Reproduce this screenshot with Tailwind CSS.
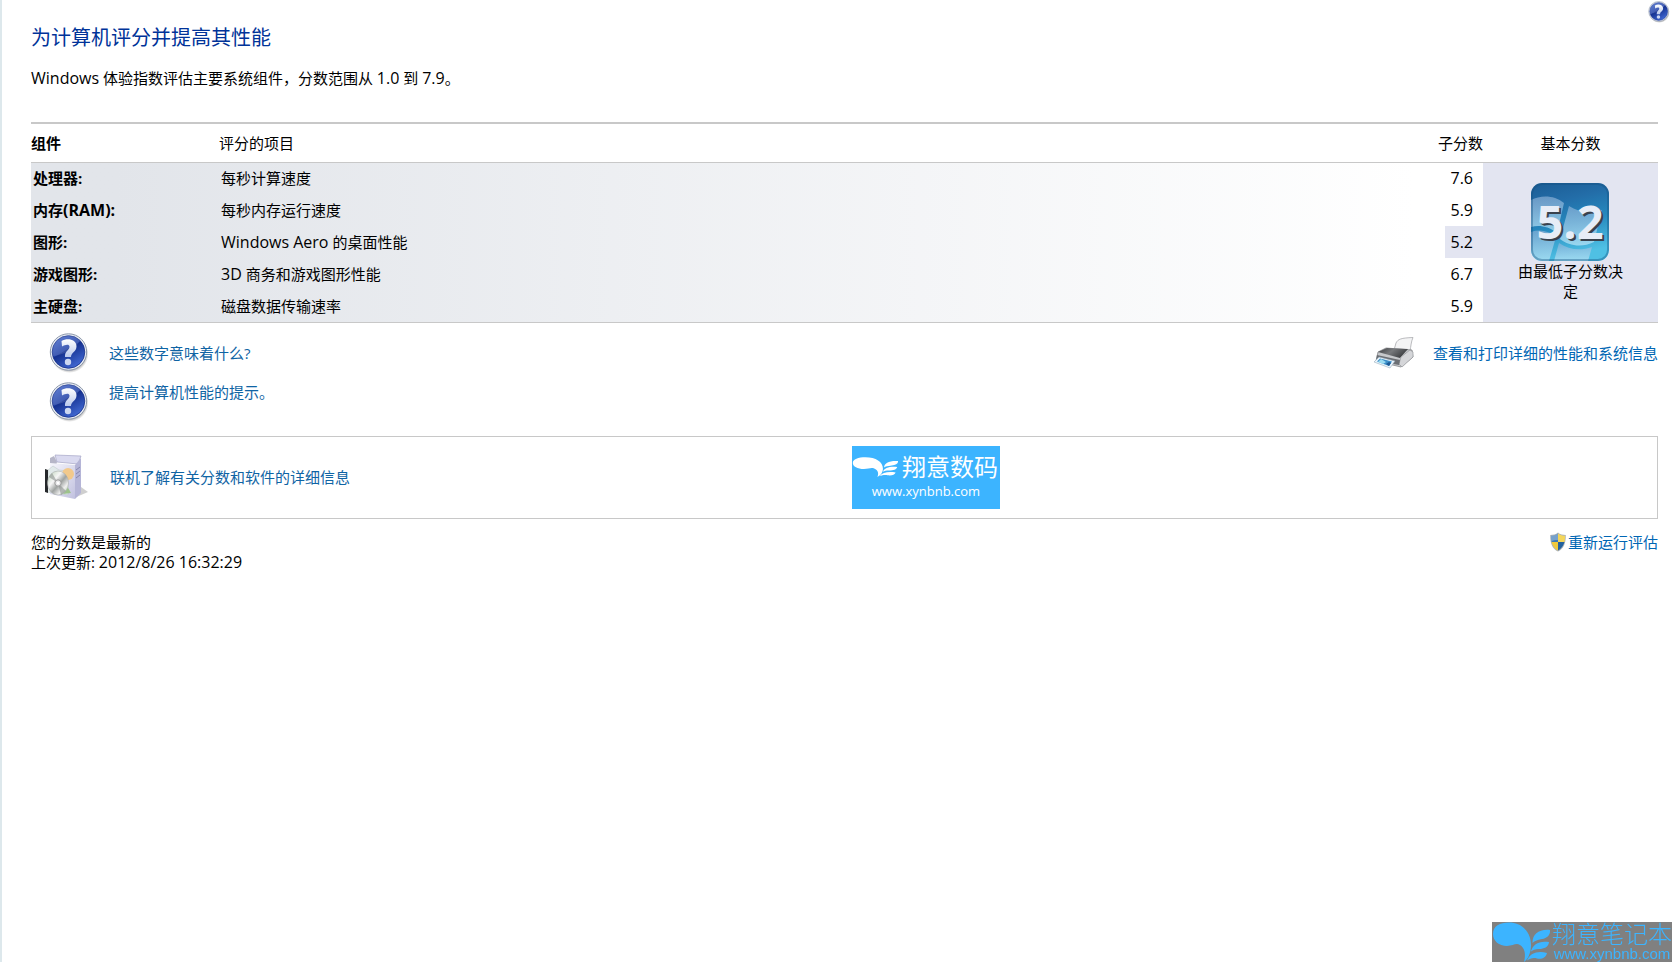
<!DOCTYPE html>
<html lang="zh-CN">
<head>
<meta charset="utf-8">
<meta name="viewport" content="width=device-width, initial-scale=1">
<title>性能信息和工具</title>
<script src="https://cdn.jsdelivr.net/npm/@tailwindcss/browser@4"></script>
</head>
<body class="relative min-h-screen border-l-2 border-[#dde8ec] bg-white pr-[14px] pl-[29px] pt-[23px] font-['Open_Sans','Noto_Sans_CJK_SC',sans-serif] text-[15px] leading-5 text-black">

<svg class="absolute h-0 w-0" aria-hidden="true">
  <defs>
    <linearGradient id="ball" x1="0" y1="0" x2="0.6" y2="1">
      <stop offset="0" stop-color="#4a6fd0"/><stop offset="0.5" stop-color="#2443a8"/><stop offset="0.52" stop-color="#14308f"/><stop offset="1" stop-color="#3f66cf"/>
    </linearGradient>
    <linearGradient id="mark" x1="0" y1="0" x2="0" y2="1">
      <stop offset="0" stop-color="#ffffff"/><stop offset="1" stop-color="#b9c8ec"/>
    </linearGradient>
    <radialGradient id="shade"><stop offset="0.8" stop-color="#555" stop-opacity="0.6"/><stop offset="1" stop-color="#777" stop-opacity="0"/></radialGradient>
    <symbol id="help" viewBox="0 0 40 40">
      <circle cx="20.5" cy="21" r="19" fill="url(#shade)"/>
      <circle cx="19.5" cy="19" r="18.2" fill="#e9edf3" stroke="#8d98ab" stroke-width="1"/>
      <circle cx="19.5" cy="19" r="16.3" fill="url(#ball)" stroke="#17308a" stroke-width="0.8"/>
      <path d="M4 23C10 23 25 18 31 7.500A16 16 0 0 0 4 23Z" fill="#fff" fill-opacity="0.14"/>
      <path d="M12.500 8C18 4.500 27.500 6 27.500 13.300C27.500 19 22 19.500 22 24H16C15.500 18 20.500 17.500 20.500 13.800C20.500 10.800 16.500 11.200 13 13.600Z" fill="url(#mark)"/>
      <circle cx="19" cy="29" r="3.200" fill="#ccd7f1"/>
    </symbol>
    <symbol id="wing" viewBox="0 0 58 40" preserveAspectRatio="none">
      <path d="M1 12C1 4 8 0.500 17 0.500C30 0.500 39 10 39 23C39 31 36 37 32 40C34 33 33 26 28 23C24 20.500 21 24 15 24C7 24 1 19 1 12Z"/>
      <path d="M40.500 21C40.500 12 47 7 58 8C58.500 12 56 16 50 17C45 18 42 19 40.500 21Z"/>
      <path d="M39 29.500C41 22 47 18.500 57 20C56.500 25 52 27 47 27C43 27 41 28 39 29.500Z"/>
      <path d="M35 38.500C38 31 46 28.500 55 31C54 35.500 50 37.500 45 36.500C41 35.500 38 36.500 35 38.500Z"/>
    </symbol>
  </defs>
</svg>

<a href="#help" aria-label="帮助" class="absolute top-px right-[2px]"><svg class="h-[22px] w-[22px]"><use href="#help"/></svg></a>

<main>
  <h1 class="text-xl leading-[30px] text-[#003399]">为计算机评分并提高其性能</h1>
  <p class="mt-[15px]"><span class="text-base leading-5">Windows</span> 体验指数评估主要系统组件，分数范围从 <span class="text-base leading-5">1.0</span> 到 <span class="text-base leading-5">7.9</span>。</p>

  <table class="mt-[34px] w-full table-fixed border-collapse text-left">
    <colgroup><col class="w-[188px]"><col><col class="w-[38px]"><col class="w-[175px]"></colgroup>
    <thead>
      <tr class="h-[39px] border-t-2 border-b border-[#c8c8c8]">
        <th scope="col" class="p-0 font-bold">组件</th>
        <th scope="col" class="p-0 font-normal">评分的项目</th>
        <th scope="col" class="p-0 font-normal"><span class="flex justify-end whitespace-nowrap">子分数</span></th>
        <th scope="col" class="p-0 text-center font-normal">基本分数</th>
      </tr>
    </thead>
    <tbody class="border-b border-[#c8c8c8]">
      <tr class="h-8 bg-linear-to-r from-[#e2e5ea] from-5% to-white to-85%">
        <th scope="row" class="p-0 pl-[2px] font-bold">处理器:</th><td class="p-0 pl-[2px]">每秒计算速度</td><td class="p-0 pr-[10px] text-right text-base leading-5">7.6</td>
        <td rowspan="5" class="bg-[#e3e5f1] p-0 text-center align-middle">
          <div class="flex flex-col items-center">
            <svg class="mr-[2px] h-[78px] w-[78px]" viewBox="0 0 78 78" role="img" aria-label="5.2">
              <defs>
                <linearGradient id="tile" x1="0" y1="0" x2="0.25" y2="1"><stop offset="0" stop-color="#1b5c94"/><stop offset="0.3" stop-color="#236da8"/><stop offset="0.6" stop-color="#2588bd"/><stop offset="1" stop-color="#4fc0e4"/></linearGradient>
                <linearGradient id="flag" x1="0" y1="0" x2="0" y2="1"><stop offset="0" stop-color="#8fb3d9" stop-opacity="0.65"/><stop offset="1" stop-color="#b6e4f6" stop-opacity="0.75"/></linearGradient>
                <clipPath id="tileclip"><rect width="78" height="78" rx="11"/></clipPath>
              </defs>
              <g clip-path="url(#tileclip)">
                <rect width="78" height="78" fill="url(#tile)"/>
                <path d="M0 17C10 12 23 12 33 20L26 50C17 43 8 42 0 44Z" fill="url(#flag)"/>
                <path d="M38 23C47 29 59 31 71 27L63 59C51 65 38 63 29 56Z" fill="url(#flag)"/>
                <path d="M0 49C9 46 18 48 25 54L18 78H0Z" fill="url(#flag)"/>
                <path d="M28 60C38 67 50 68 61 64L57 78H23Z" fill="url(#flag)"/>
                <rect x="1" y="1" width="76" height="76" rx="10" fill="none" stroke="#155180" stroke-opacity="0.4" stroke-width="2"/>
              </g>
              <g font-family="Open Sans, sans-serif" font-weight="700" font-size="47" text-anchor="middle">
                <text x="41" y="58" fill="#39424e">5.2</text>
                <text x="39" y="56" fill="#e7edf7">5.2</text>
              </g>
            </svg>
            <span class="w-[110px]">由最低子分数决定</span>
          </div>
        </td>
      </tr>
      <tr class="h-8 bg-linear-to-r from-[#e2e5ea] from-5% to-white to-85%">
        <th scope="row" class="p-0 pl-[2px] font-bold">内存<span class="text-base leading-5">(RAM):</span></th><td class="p-0 pl-[2px]">每秒内存运行速度</td><td class="p-0 pr-[10px] text-right text-base leading-5">5.9</td>
      </tr>
      <tr class="h-8 bg-linear-to-r from-[#e2e5ea] from-5% to-white to-85%">
        <th scope="row" class="p-0 pl-[2px] font-bold">图形:</th><td class="p-0 pl-[2px]"><span class="text-base leading-5">Windows Aero</span> 的桌面性能</td><td class="bg-[#e3e5f1] p-0 pr-[10px] text-right text-base leading-5">5.2</td>
      </tr>
      <tr class="h-8 bg-linear-to-r from-[#e2e5ea] from-5% to-white to-85%">
        <th scope="row" class="p-0 pl-[2px] font-bold">游戏图形:</th><td class="p-0 pl-[2px]"><span class="text-base leading-5">3D</span> 商务和游戏图形性能</td><td class="p-0 pr-[10px] text-right text-base leading-5">6.7</td>
      </tr>
      <tr class="h-8 bg-linear-to-r from-[#e2e5ea] from-5% to-white to-85%">
        <th scope="row" class="p-0 pl-[2px] font-bold">主硬盘:</th><td class="p-0 pl-[2px]">磁盘数据传输速率</td><td class="p-0 pr-[10px] text-right text-base leading-5">5.9</td>
      </tr>
    </tbody>
  </table>

  <div class="mt-[10px] flex items-start justify-between pl-[18px]">
    <ul class="flex flex-col gap-2 text-[#0f64a4]">
      <li class="flex h-[41px] items-center gap-5"><svg class="h-10 w-10 shrink-0"><use href="#help"/></svg><a href="#numbers">这些数字意味着什么?</a></li>
      <li class="flex h-[41px] items-start gap-5"><svg class="h-10 w-10 shrink-0"><use href="#help"/></svg><a href="#tips">提高计算机性能的提示。</a></li>
    </ul>
    <a href="#print" class="flex h-[41px] items-center gap-[19px] text-[#0066b4]">
      <svg class="h-8 w-10" viewBox="0 0 40 32" aria-hidden="true">
        <defs><linearGradient id="lid" x1="0" y1="0" x2="1" y2="0.4"><stop offset="0" stop-color="#3b3d40"/><stop offset="0.5" stop-color="#77797c"/><stop offset="1" stop-color="#3c3e41"/></linearGradient></defs>
        <path d="M22 6C24 2 27 1 39 0.500C37 5 37 9 36 14L20 13Z" fill="#f4f4f5" stroke="#a9abaf" stroke-width="0.800"/>
        <path d="M4 15L12 11L38 13L39 20L27 30L2 24Z" fill="#c6c8cb" stroke="#77797d" stroke-width="0.700"/>
        <path d="M4 15L13 11L34 12L26 21Z" fill="url(#lid)"/>
        <path d="M27 20L36 13L39 15V20L28 30L25 27Z" fill="#d5d6d9" stroke="#8e9094" stroke-width="0.600"/>
        <path d="M3 18L26 23L25 28L2 24Z" fill="#6b6e73"/>
        <path d="M5 20L21 24L16 31L0 25Z" fill="#eaf4fb" stroke="#8ba1b3" stroke-width="0.500"/>
        <path d="M6 21.500L18 24.500L15 29L3 24.500Z" fill="#3c8fc9"/>
        <path d="M7 22L12 25L9 27L4 25Z" fill="#9bdcf2"/><path d="M12 27L15 25L17 26L15 29Z" fill="#1d5995"/>
      </svg>
      <span>查看和打印详细的性能和系统信息</span>
    </a>
  </div>

  <section class="mt-[13px] grid h-[83px] grid-cols-[21fr_148px_17fr] items-center border border-[#c8c8c8] pr-[3px] pl-3">
    <a href="#online" class="flex items-center gap-[22px] text-[#0f64a4]">
      <svg class="h-[46px] w-11" viewBox="0 0 44 46" aria-hidden="true">
        <defs>
          <linearGradient id="carton" x1="0" y1="0" x2="1" y2="1"><stop offset="0" stop-color="#f7f7fd"/><stop offset="1" stop-color="#c1c1df"/></linearGradient>
          <linearGradient id="disc" x1="0" y1="0" x2="1" y2="1"><stop offset="0" stop-color="#b6cfb3"/><stop offset="0.35" stop-color="#f6f6f6"/><stop offset="0.55" stop-color="#9fa3a1"/><stop offset="0.75" stop-color="#efefef"/><stop offset="1" stop-color="#a9c8a4"/></linearGradient>
        </defs>
        <path d="M30 44L44 38L37 33Z" fill="#bbb" fill-opacity="0.7"/>
        <path d="M6 4L10 2L13 8L12 12H6Z" fill="#b6b6c8"/>
        <path d="M11 1L37 2L34 10L13 8Z" fill="#dadaf0" stroke="#a5a5c6" stroke-width="0.700"/>
        <path d="M6 9L31 11V45L6 40Z" fill="url(#carton)"/>
        <path d="M31 11L37 4V39L31 45Z" fill="#b5b5d7"/>
        <path d="M32 16L36 13M32 20L36 17M32 24L36 21" stroke="#8787ae" stroke-width="1"/>
        <path d="M4 16L9 12L15 16L24 17V41L3 38Z" fill="#dfe9e7" fill-opacity="0.8" stroke="#b9c3c5" stroke-width="0.500"/>
        <circle cx="24" cy="20" r="6" fill="#f2c98b"/>
        <path d="M5 25L10 19L15 26Z" fill="#95bd80"/><path d="M19 40L23 32L27 39Z" fill="#9dc28c"/>
        <path d="M1 15L4 16V39L1 38Z" fill="#26282b"/>
        <ellipse cx="14" cy="29" rx="10.500" ry="12" fill="url(#disc)" stroke="#a0a5a5" stroke-width="0.500"/>
        <path d="M14 29L5 23L8 19ZM14 29L22 37L17 41Z" fill="#858b89" fill-opacity="0.550"/>
        <circle cx="14" cy="29" r="3.200" fill="#e9e9ea" stroke="#999"/><circle cx="14" cy="29" r="1.200" fill="#fff"/>
      </svg>
      <span>联机了解有关分数和软件的详细信息</span>
    </a>
    <a href="#xynbnb" class="flex h-[63px] flex-col items-center justify-center overflow-hidden bg-[#3cb4ff] text-white">
      <span class="flex w-full items-center gap-1">
        <svg class="h-5 w-[46px] shrink-0" fill="currentColor" aria-hidden="true"><use href="#wing"/></svg>
        <span class="text-2xl leading-7 whitespace-nowrap">翔意数码</span>
      </span>
      <span class="text-[13px] leading-5">www.xynbnb.com</span>
    </a>
  </section>

  <footer class="mt-[13px] flex items-start justify-between">
    <p>您的分数是最新的<br>上次更新: <span class="text-base leading-5">2012/8/26 16:32:29</span></p>
    <a href="#rerun" class="flex items-center gap-[2px] text-[#0066b4]">
      <svg class="h-5 w-4" viewBox="0 0 16 20" aria-hidden="true">
        <defs><clipPath id="shieldclip"><path d="M8 1.500C10 3 12.500 3.800 15 3.800C15.200 11 13 16 8 18.500C3 16 0.800 11 1 3.800C3.500 3.800 6 3 8 1.500Z"/></clipPath></defs>
        <path d="M8 0.500C10 2.300 13 3 15.800 3C16 11.500 13.500 17 8 19.500C2.500 17 0 11.500 0.200 3C3 3 6 2.300 8 0.500Z" fill="#aeb4b8"/>
        <g clip-path="url(#shieldclip)"><path d="M0 0H8V10H0Z" fill="#3b79b5"/><path d="M8 0H16V10H8Z" fill="#f4d65a"/><path d="M0 10H8V20H0Z" fill="#efc93d"/><path d="M8 10H16V20H8Z" fill="#24629f"/><path d="M0 3C5 3 7 1 8 1V8C5 8 3 8 1 10Z" fill="#fff" fill-opacity="0.3"/></g>
      </svg>
      <span>重新运行评估</span>
    </a>
  </footer>
</main>

<aside class="fixed right-0 bottom-0 flex h-10 w-[180px] items-center justify-between bg-[#808080] text-[#3cb4ff]">
  <svg class="h-10 w-[58px] shrink-0" fill="currentColor" aria-hidden="true"><use href="#wing"/></svg>
  <div class="flex w-[120px] flex-col items-center whitespace-nowrap">
    <span class="text-2xl leading-6 font-light">翔意笔记本</span>
    <span class="font-['Liberation_Sans',sans-serif] text-[15px] leading-4">www.xynbnb.com</span>
  </div>
</aside>
</body>
</html>
